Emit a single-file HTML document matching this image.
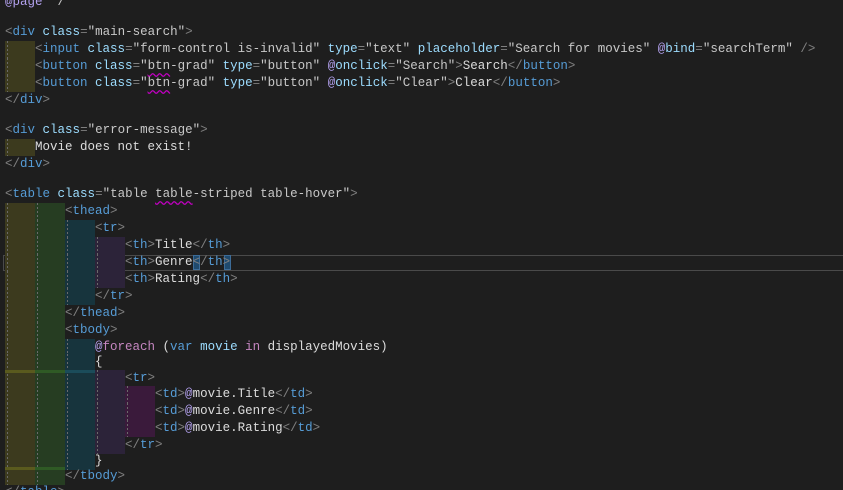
<!DOCTYPE html>
<html><head><meta charset="utf-8"><style>
html,body{margin:0;padding:0;background:#1e1e1e;width:843px;height:490px;overflow:hidden;position:relative}
.l{position:absolute;left:5px;height:17px;line-height:17px;font-family:"Liberation Mono",monospace;font-size:12.5px;white-space:pre;color:#dcdcdc;display:block}
.i{display:inline-block;vertical-align:top;width:30px;height:17px;background-image:linear-gradient(to bottom,#6a6a6a 50%,transparent 50%);background-size:1px 4px;background-repeat:repeat-y;background-position:2px 0}
.c1{background-color:#3c3a1e}.c2{background-color:#263d22}.c3{background-color:#17343d}.c4{background-color:#2c2339}.c5{background-color:#3a1a3b}
.p{color:#808080}.t{color:#569cd6}.a{color:#9cdcfe}.s{color:#c8c8c8}.r{color:#b4a2f0}.k{color:#c586c0}.w{text-decoration:underline wavy #c000c0;text-underline-offset:3px}
.cur{position:absolute;left:3px;top:255px;width:845px;height:14px;border:1px solid #4a4a4a}
.br{position:absolute;top:255px;width:7px;height:15px;background:#1f4a6e;border:1px solid #3d6c98;box-sizing:border-box}
.band{position:absolute;height:3px}
</style></head><body>
<div class="cur"></div>
<div class="br" style="left:193px"></div>
<div class="br" style="left:224px"></div>

<div class="l" style="top:-6px"><span class="r">@page</span> <span class="s">"/"</span></div>
<div class="l" style="top:24px"><span class="p">&lt;</span><span class="t">div</span> <span class="a">class</span><span class="p">=</span><span class="s">"main-search"</span><span class="p">&gt;</span></div>
<div class="l" style="top:41px"><span class="i c1"></span><span class="p">&lt;</span><span class="t">input</span> <span class="a">class</span><span class="p">=</span><span class="s">"form-control is-invalid"</span> <span class="a">type</span><span class="p">=</span><span class="s">"text"</span> <span class="a">placeholder</span><span class="p">=</span><span class="s">"Search for movies"</span> <span class="r">@</span><span class="a">bind</span><span class="p">=</span><span class="s">"searchTerm"</span> <span class="p">/&gt;</span></div>
<div class="l" style="top:58px"><span class="i c1"></span><span class="p">&lt;</span><span class="t">button</span> <span class="a">class</span><span class="p">=</span><span class="s">"<span class="w">btn</span>-grad"</span> <span class="a">type</span><span class="p">=</span><span class="s">"button"</span> <span class="r">@</span><span class="a">onclick</span><span class="p">=</span><span class="s">"Search"</span><span class="p">&gt;</span>Search<span class="p">&lt;/</span><span class="t">button</span><span class="p">&gt;</span></div>
<div class="l" style="top:75px"><span class="i c1"></span><span class="p">&lt;</span><span class="t">button</span> <span class="a">class</span><span class="p">=</span><span class="s">"<span class="w">btn</span>-grad"</span> <span class="a">type</span><span class="p">=</span><span class="s">"button"</span> <span class="r">@</span><span class="a">onclick</span><span class="p">=</span><span class="s">"Clear"</span><span class="p">&gt;</span>Clear<span class="p">&lt;/</span><span class="t">button</span><span class="p">&gt;</span></div>
<div class="l" style="top:92px"><span class="p">&lt;/</span><span class="t">div</span><span class="p">&gt;</span></div>

<div class="l" style="top:122px"><span class="p">&lt;</span><span class="t">div</span> <span class="a">class</span><span class="p">=</span><span class="s">"error-message"</span><span class="p">&gt;</span></div>
<div class="l" style="top:139px"><span class="i c1"></span>Movie does not exist!</div>
<div class="l" style="top:156px"><span class="p">&lt;/</span><span class="t">div</span><span class="p">&gt;</span></div>

<div class="l" style="top:186px"><span class="p">&lt;</span><span class="t">table</span> <span class="a">class</span><span class="p">=</span><span class="s">"table <span class="w">table</span>-striped table-hover"</span><span class="p">&gt;</span></div>
<div class="l" style="top:203px"><span class="i c1"></span><span class="i c2"></span><span class="p">&lt;</span><span class="t">thead</span><span class="p">&gt;</span></div>
<div class="l" style="top:220px"><span class="i c1"></span><span class="i c2"></span><span class="i c3"></span><span class="p">&lt;</span><span class="t">tr</span><span class="p">&gt;</span></div>
<div class="l" style="top:237px"><span class="i c1"></span><span class="i c2"></span><span class="i c3"></span><span class="i c4"></span><span class="p">&lt;</span><span class="t">th</span><span class="p">&gt;</span>Title<span class="p">&lt;/</span><span class="t">th</span><span class="p">&gt;</span></div>
<div class="l" style="top:254px"><span class="i c1"></span><span class="i c2"></span><span class="i c3"></span><span class="i c4"></span><span class="p">&lt;</span><span class="t">th</span><span class="p">&gt;</span>Genre<span class="p">&lt;/</span><span class="t">th</span><span class="p">&gt;</span></div>
<div class="l" style="top:271px"><span class="i c1"></span><span class="i c2"></span><span class="i c3"></span><span class="i c4"></span><span class="p">&lt;</span><span class="t">th</span><span class="p">&gt;</span>Rating<span class="p">&lt;/</span><span class="t">th</span><span class="p">&gt;</span></div>
<div class="l" style="top:288px"><span class="i c1"></span><span class="i c2"></span><span class="i c3"></span><span class="p">&lt;/</span><span class="t">tr</span><span class="p">&gt;</span></div>
<div class="l" style="top:305px"><span class="i c1"></span><span class="i c2"></span><span class="p">&lt;/</span><span class="t">thead</span><span class="p">&gt;</span></div>
<div class="l" style="top:322px"><span class="i c1"></span><span class="i c2"></span><span class="p">&lt;</span><span class="t">tbody</span><span class="p">&gt;</span></div>
<div class="l" style="top:339px"><span class="i c1"></span><span class="i c2"></span><span class="i c3"></span><span class="r">@</span><span class="k">foreach</span> (<span class="t">var</span> <span class="a">movie</span> <span class="k">in</span> displayedMovies)</div>
<div class="l" style="top:354px"><span class="i c1"></span><span class="i c2"></span><span class="i c3"></span>{</div>
<div class="l" style="top:370px"><span class="i c1"></span><span class="i c2"></span><span class="i c3"></span><span class="i c4"></span><span class="p">&lt;</span><span class="t">tr</span><span class="p">&gt;</span></div>
<div class="l" style="top:386px"><span class="i c1"></span><span class="i c2"></span><span class="i c3"></span><span class="i c4"></span><span class="i c5"></span><span class="p">&lt;</span><span class="t">td</span><span class="p">&gt;</span><span class="r">@</span>movie.Title<span class="p">&lt;/</span><span class="t">td</span><span class="p">&gt;</span></div>
<div class="l" style="top:403px"><span class="i c1"></span><span class="i c2"></span><span class="i c3"></span><span class="i c4"></span><span class="i c5"></span><span class="p">&lt;</span><span class="t">td</span><span class="p">&gt;</span><span class="r">@</span>movie.Genre<span class="p">&lt;/</span><span class="t">td</span><span class="p">&gt;</span></div>
<div class="l" style="top:420px"><span class="i c1"></span><span class="i c2"></span><span class="i c3"></span><span class="i c4"></span><span class="i c5"></span><span class="p">&lt;</span><span class="t">td</span><span class="p">&gt;</span><span class="r">@</span>movie.Rating<span class="p">&lt;/</span><span class="t">td</span><span class="p">&gt;</span></div>
<div class="l" style="top:437px"><span class="i c1"></span><span class="i c2"></span><span class="i c3"></span><span class="i c4"></span><span class="p">&lt;/</span><span class="t">tr</span><span class="p">&gt;</span></div>
<div class="l" style="top:453px"><span class="i c1"></span><span class="i c2"></span><span class="i c3"></span>}</div>
<div class="l" style="top:468px"><span class="i c1"></span><span class="i c2"></span><span class="p">&lt;/</span><span class="t">tbody</span><span class="p">&gt;</span></div>
<div class="l" style="top:484px"><span class="p">&lt;/</span><span class="t">table</span><span class="p">&gt;</span></div>

<div class="band" style="left:5px;top:370px;width:30px;background:#5a5a1e"></div>
<div class="band" style="left:35px;top:370px;width:30px;background:#2f5a25"></div>
<div class="band" style="left:65px;top:370px;width:30px;background:#1b4c5a"></div>
<div class="band" style="left:5px;top:467px;width:30px;background:#5a5a1e"></div>
<div class="band" style="left:35px;top:467px;width:30px;background:#2f5a25"></div>
</body></html>
